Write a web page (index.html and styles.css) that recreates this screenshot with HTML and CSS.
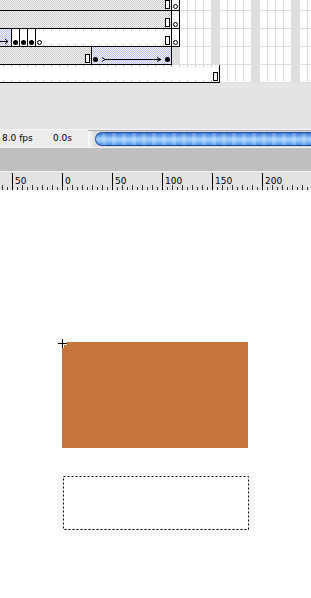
FILE: index.html
```html
<!DOCTYPE html>
<html lang="en">
<head>
  <meta charset="UTF-8" />
  <meta name="viewport" content="width=device-width, initial-scale=1.0" />
  <title>Timeline</title>
  <link rel="stylesheet" href="styles.css">
</head>
<body>
  <div id="timeline">
    <div class="layer">
      <div class="span hatch" style="width: 171px"><i class="end"></i></div>
      <div class="key last"><b class="ring"></b></div>
    </div>
    <div class="layer">
      <div class="span hatch" style="width: 171px"><i class="end"></i></div>
      <div class="key last"><b class="ring"></b></div>
    </div>
    <div class="layer">
      <div class="span tween" style="width: 11px">
        <svg width="11" height="17" viewBox="0 0 11 17">
          <path d="M0 12.5H8M5 10L8 12.5L5 15" fill="none" stroke="#000" stroke-width="1" />
        </svg>
      </div>
      <div class="key"><b class="dot"></b></div>
      <div class="key"><b class="dot"></b></div>
      <div class="key"><b class="dot"></b></div>
      <div class="span plain ticked" style="width: 136px"><b class="ring first"></b><i class="end"></i></div>
      <div class="key last"><b class="ring"></b></div>
    </div>
    <div class="layer">
      <div class="span hatch" style="width: 91px"><i class="end"></i></div>
      <div class="span tween boxed" style="width: 81px">
        <svg width="79" height="17" viewBox="0 0 79 17">
          <circle cx="3.5" cy="12.5" r="2.5" fill="#000" />
          <path d="M10 10.5L13 12.5L10 14.5M13 12.5H69M65 10.5L69 12.5L65 14.5" fill="none" stroke="#000" stroke-width="1" />
          <circle cx="75.5" cy="12.5" r="2.5" fill="#000" />
        </svg>
      </div>
    </div>
    <div class="layer">
      <div class="span plain ticked closed" style="width: 220px"><i class="end"></i></div>
    </div>
  </div>

  <div class="spacer"></div>

  <div id="status">
    <span class="fps">8.0 fps</span>
    <span class="time">0.0s</span>
    <div class="track"><div class="thumb"></div></div>
  </div>

  <div class="band"></div>

  <div id="ruler">
    <span class="mark">50</span>
    <span class="mark">0</span>
    <span class="mark">50</span>
    <span class="mark">100</span>
    <span class="mark">150</span>
    <span class="mark">200</span>
  </div>

  <div id="stage">
    <div class="shape"></div>
    <svg class="cross" width="9" height="9" viewBox="0 0 9 9">
      <path d="M4.5 0V9M0 4.5H9" stroke="#fff" stroke-width="3" />
      <path d="M4.5 0V9M0 4.5H9" stroke="#000" stroke-width="1" />
    </svg>
    <svg class="marquee" width="186" height="54" viewBox="0 0 186 54">
      <rect x="0.5" y="0.5" width="185" height="53" fill="none" stroke="#000" stroke-width="1" stroke-dasharray="2 2" />
    </svg>
  </div>
</body>
</html>
```

FILE: styles.css
```css
* {
  box-sizing: border-box;
}
body {
  margin: 0;
  background: #fff;
  font-family: "DejaVu Sans", Verdana, sans-serif;
  font-size: 9px;
  color: #000;
  overflow: hidden;
}

/* timeline frames */
#timeline {
  margin-top: -7px;
  height: 90px;
  background-color: #fff;
  background-image:
    repeating-linear-gradient(to bottom, transparent 0 17px, #dedede 17px 18px),
    repeating-linear-gradient(to right, transparent 0 3px, #dedede 3px 4px, transparent 4px 8px),
    repeating-linear-gradient(to right, transparent 0 11px, #dedede 11px 19px, transparent 19px 40px);
}
.layer {
  display: flex;
  height: 18px;
}
.span {
  height: 18px;
  border-bottom: 1px solid #000;
  display: flex;
  align-items: flex-end;
  padding-bottom: 1px;
}
.hatch {
  background: repeating-conic-gradient(#cdcdcd 0 25%, #f3f3f3 0 50%) 0 0 / 2px 2px;
}
.tween {
  background: repeating-conic-gradient(#c4c4f4 0 25%, #f0f0ff 0 50%) 0 0 / 2px 2px;
  padding-bottom: 0;
}
.tween svg {
  display: block;
}
.boxed {
  border-left: 1px solid #000;
  border-right: 1px solid #000;
}
.plain {
  background-color: #fff;
  border-left: 1px solid #000;
}
.closed {
  border-left: 0;
  border-right: 1px solid #000;
}
.ticked {
  --tick: 7px;
  background-image:
    linear-gradient(to right, #c8c8c8 0 1px, transparent 1px),
    linear-gradient(to right, #c8c8c8 0 1px, transparent 1px);
  background-size: 8px 2px, 8px 2px;
  background-repeat: repeat-x;
  background-position: var(--tick) 0, var(--tick) 100%;
}
.closed.ticked {
  --tick: 3px;
}
.end {
  display: block;
  width: 5px;
  height: 9px;
  margin-left: auto;
  margin-right: 1px;
  border: 1px solid #000;
  background: #fff;
}
.key {
  width: 8px;
  height: 18px;
  background: #fff;
  border-left: 1px solid #000;
  border-bottom: 1px solid #000;
  display: flex;
  justify-content: center;
  align-items: flex-end;
  padding-bottom: 1px;
}
.key.last {
  width: 9px;
  border-right: 1px solid #000;
}
.dot,
.ring {
  display: block;
  width: 5px;
  height: 5px;
  border-radius: 50%;
}
.dot {
  background: #000;
}
.ring {
  border: 1px solid #000;
  background: #fff;
}
.ring.first {
  margin-left: 1px;
}

.spacer {
  height: 46px;
  background: #e4e4e4;
}

/* status bar */
#status {
  display: flex;
  height: 18px;
  background: #ededed;
  border-top: 1px solid #f8f8f8;
  line-height: 17px;
}
.fps {
  width: 53px;
  padding-left: 2px;
}
.time {
  width: 35px;
}
.track {
  flex: 1;
  padding: 1px 0 1px 7px;
  background: linear-gradient(to right, #fafafa, #dcdcdc 7px);
  border-top: 1px solid #a8a8a8;
}
.thumb {
  height: 14px;
  border: 1px solid #1f4f9f;
  border-right: 0;
  border-radius: 7px 0 0 7px;
  background:
    repeating-linear-gradient(to right, rgba(255, 255, 255, 0) 0 6px, rgba(255, 255, 255, 0.18) 6px 10px),
    linear-gradient(to bottom, #3d78d4 0, #6aa6ec 25%, #a9d4fb 50%, #8cc2f6 70%, #4d8ee2 100%);
}

.band {
  height: 25px;
  background: #c0c0c0;
  border-top: 1px solid #f2f2f2;
  border-bottom: 1px solid #f2f2f2;
}

/* ruler */
#ruler {
  display: flex;
  height: 18px;
  padding-left: 12px;
  background-color: #e3e3e3;
  background-image:
    linear-gradient(#333, #333),
    linear-gradient(#333, #333);
  background-size: 1px 5px, 1px 3px;
  background-repeat: no-repeat;
  background-image:
    linear-gradient(to right, #333 0 1px, transparent 1px),
    linear-gradient(to right, #333 0 1px, transparent 1px);
  background-size: 10px 5px, 5px 3px;
  background-repeat: repeat-x;
  background-position: 2px 100%, 2px 100%;
}
.mark {
  width: 50px;
  height: 17px;
  margin-top: 1px;
  padding: 3px 0 0 2px;
  border-left: 1px solid #000;
  line-height: 10px;
  flex: none;
}

/* stage */
#stage {
  position: relative;
  height: 408px;
  background: #fff;
}
.shape {
  position: absolute;
  left: 62px;
  top: 152px;
  width: 186px;
  height: 106px;
  background: #c4733a;
}
.cross {
  position: absolute;
  left: 58px;
  top: 149px;
}
.marquee {
  position: absolute;
  left: 63px;
  top: 286px;
}
```
